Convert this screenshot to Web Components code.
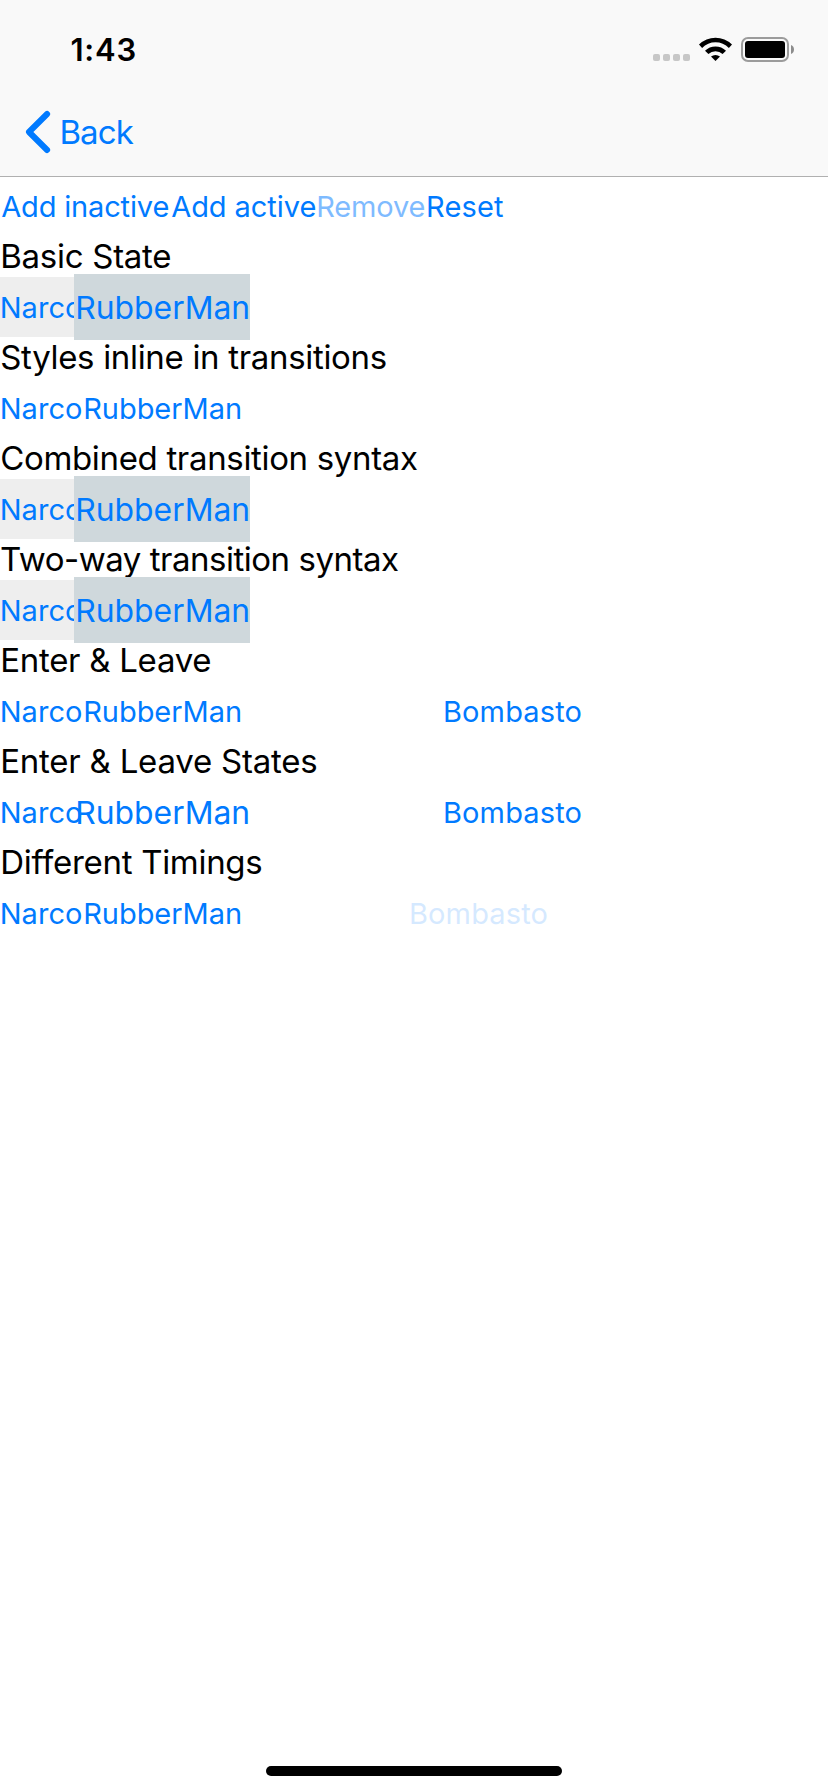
<!DOCTYPE html>
<html lang="en">
<head>
<meta charset="utf-8">
<meta name="viewport" content="width=device-width">
<title>Animations</title>
<style>
html, body { margin: 0; height: 100%; background: #fff; }
body { font-family: Inter, "Liberation Sans", sans-serif; overflow: hidden; }
</style>
</head>
<body>
<phone-screen>
  <status-bar slot="top"></status-bar>
  <nav-bar slot="top">Back</nav-bar>

  <button-row>
    <action-button w="170" from="1.2" to="168.4">Add inactive</action-button>
    <action-button w="146" from="1.2" to="145.4">Add active</action-button>
    <action-button w="110" from="2.3" to="108.5" disabled>Remove</action-button>
    <action-button w="80" from="2" to="77">Reset</action-button>
  </button-row>

  <section-label from="2.2" to="170.3">Basic State</section-label>
  <button-row>
    <action-button w="82" from="1.7" to="81" class="inactive">Narco</action-button>
    <action-button w="160" from="3.2" to="158" class="active">RubberMan</action-button>
  </button-row>

  <section-label from="1.2" to="385.7">Styles inline in transitions</section-label>
  <button-row>
    <action-button w="82" from="1.7" to="81">Narco</action-button>
    <action-button w="160" from="3.2" to="158">RubberMan</action-button>
  </button-row>

  <section-label from="1.2" to="417">Combined transition syntax</section-label>
  <button-row>
    <action-button w="82" from="1.7" to="81" class="inactive">Narco</action-button>
    <action-button w="160" from="3.2" to="158" class="active">RubberMan</action-button>
  </button-row>

  <section-label from="1" to="398">Two-way transition syntax</section-label>
  <button-row>
    <action-button w="82" from="1.7" to="81" class="inactive">Narco</action-button>
    <action-button w="160" from="3.2" to="158" class="active">RubberMan</action-button>
  </button-row>

  <section-label from="2.2" to="210.3">Enter &amp; Leave</section-label>
  <button-row>
    <action-button w="82" from="1.7" to="81">Narco</action-button>
    <action-button w="160" from="3.2" to="158">RubberMan</action-button>
    <action-button w="140" from="2.9" to="138.6" style="margin-left:200px">Bombasto</action-button>
  </button-row>

  <section-label from="2.2" to="316.3">Enter &amp; Leave States</section-label>
  <button-row>
    <action-button w="82" from="1.7" to="81">Narco</action-button>
    <action-button w="160" from="3.2" to="158" class="grown">RubberMan</action-button>
    <action-button w="140" from="2.9" to="138.6" style="margin-left:200px">Bombasto</action-button>
  </button-row>

  <section-label from="2.2" to="261.3">Different Timings</section-label>
  <button-row>
    <action-button w="82" from="1.7" to="81">Narco</action-button>
    <action-button w="160" from="3.2" to="158">RubberMan</action-button>
    <action-button w="140" from="2.9" to="138.6" class="leaving" style="margin-left:166px">Bombasto</action-button>
  </button-row>
</phone-screen>

<script>
const ctx = document.createElement('canvas').getContext('2d');

// Tracks a run of text so that its ink spans from..to inside its box.
function fit(el, text, size, weight, from, to) {
  ctx.font = `${weight} ${size}px Inter, "Liberation Sans", sans-serif`;
  const m = ctx.measureText(text);
  const ink = m.actualBoundingBoxRight + m.actualBoundingBoxLeft;
  el.style.letterSpacing = ((to - from - ink) / (text.length - 1)).toFixed(3) + 'px';
  el.style.marginLeft = (from + m.actualBoundingBoxLeft).toFixed(2) + 'px';
}

class Base extends HTMLElement {
  render(html) {
    this.attachShadow({ mode: 'open' }).innerHTML = html;
  }
  fitSelf(size) {
    fit(this.shadowRoot.querySelector('span'), this.textContent.trim(), size, 400,
      +this.getAttribute('from'), +this.getAttribute('to'));
  }
}

customElements.define('phone-screen', class extends Base {
  connectedCallback() {
    this.render(`<style>
      :host { display: flex; flex-direction: column; height: 1792px; background: #fff; }
      header { height: 176px; flex: none; background: #f9f9f9; box-shadow: 0 1px 0 #b0b0b0; }
      main { flex: 1; }
      footer { display: flex; justify-content: center; padding-bottom: 16px; }
      .home { width: 296px; height: 10px; border-radius: 5px; background: #000; }
    </style>
    <header><slot name="top"></slot></header>
    <main><slot></slot></main>
    <footer><div class="home"></div></footer>`);
  }
});

customElements.define('status-bar', class extends Base {
  connectedCallback() {
    this.render(`<style>
      :host { display: flex; justify-content: space-between; height: 88px; }
      span { display: block; font-size: 31px; font-weight: 600; line-height: 100px; white-space: nowrap; }
      svg { display: block; flex: none; }
    </style>
    <span>1:43</span>
    <svg width="200" height="88" viewBox="628 0 200 88">
      <g fill="#c7c7c7">
        <rect x="653" y="54" width="7" height="7" rx="2"/><rect x="663" y="54" width="7" height="7" rx="2"/>
        <rect x="673" y="54" width="7" height="7" rx="2"/><rect x="683" y="54" width="7" height="7" rx="2"/>
      </g>
      <path d="M699 44.6 A23.4 23.4 0 0 1 732 44.6 L728.9 47.9 A19 19 0 0 0 702.1 47.9 Z"/>
      <path d="M705 50.7 A15 15 0 0 1 726 50.7 L722.6 54.1 A10.4 10.4 0 0 0 708.4 54.1 Z"/>
      <path d="M711 56.6 A6.8 6.8 0 0 1 720 56.6 L715.5 61 Z"/>
      <rect x="742" y="38" width="46" height="23" rx="6" fill="none" stroke="#9c9c9c" stroke-width="2"/>
      <rect x="745" y="41" width="40" height="17" rx="3"/>
      <path d="M791 45 C795 46.4 795 52.6 791 54 Z" fill="#8c8c8c"/>
    </svg>`);
    fit(this.shadowRoot.querySelector('span'), '1:43', 31, 600, 71.4, 135.4);
  }
});

customElements.define('nav-bar', class extends Base {
  connectedCallback() {
    this.render(`<style>
      :host { display: flex; align-items: center; height: 88px; color: #007aff; }
      svg { display: block; margin-left: 24px; width: 28px; height: 44px; flex: none; }
      span { display: block; font-size: 33px; line-height: 88px; white-space: nowrap; }
    </style>
    <svg viewBox="0 0 28 44"><path d="M23.1 4 L5 22 L23.1 40" fill="none" stroke="#007aff" stroke-width="6" stroke-linecap="round" stroke-linejoin="round"/></svg>
    <span><slot></slot></span>`);
    fit(this.shadowRoot.querySelector('span'), 'Back', 33, 400, 9.4, 81.8);
  }
});

customElements.define('button-row', class extends Base {
  connectedCallback() {
    this.render(`<style>:host { display: flex; height: 60px; }</style><slot></slot>`);
  }
});

customElements.define('section-label', class extends Base {
  connectedCallback() {
    this.render(`<style>
      :host { display: block; height: 41px; color: #000; }
      span { display: block; font-size: 33px; line-height: 41px; white-space: nowrap; }
    </style><span><slot></slot></span>`);
    this.fitSelf(33);
  }
});

customElements.define('action-button', class extends Base {
  connectedCallback() {
    this.render(`<style>
      :host { display: block; flex: none; width: ${this.getAttribute('w')}px; height: 60px; color: #007aff; }
      :host([disabled]) { opacity: .5; }
      :host(.inactive) { background: #eee; }
      :host(.active) { background: #cfd8dc; }
      :host(.active), :host(.grown) { transform: scale(1.1); }
      :host(.leaving) { opacity: .16; }
      span { display: block; font-size: 29px; line-height: 62px; white-space: nowrap; }
    </style><span><slot></slot></span>`);
    this.fitSelf(29);
  }
});
</script>
</body>
</html>
